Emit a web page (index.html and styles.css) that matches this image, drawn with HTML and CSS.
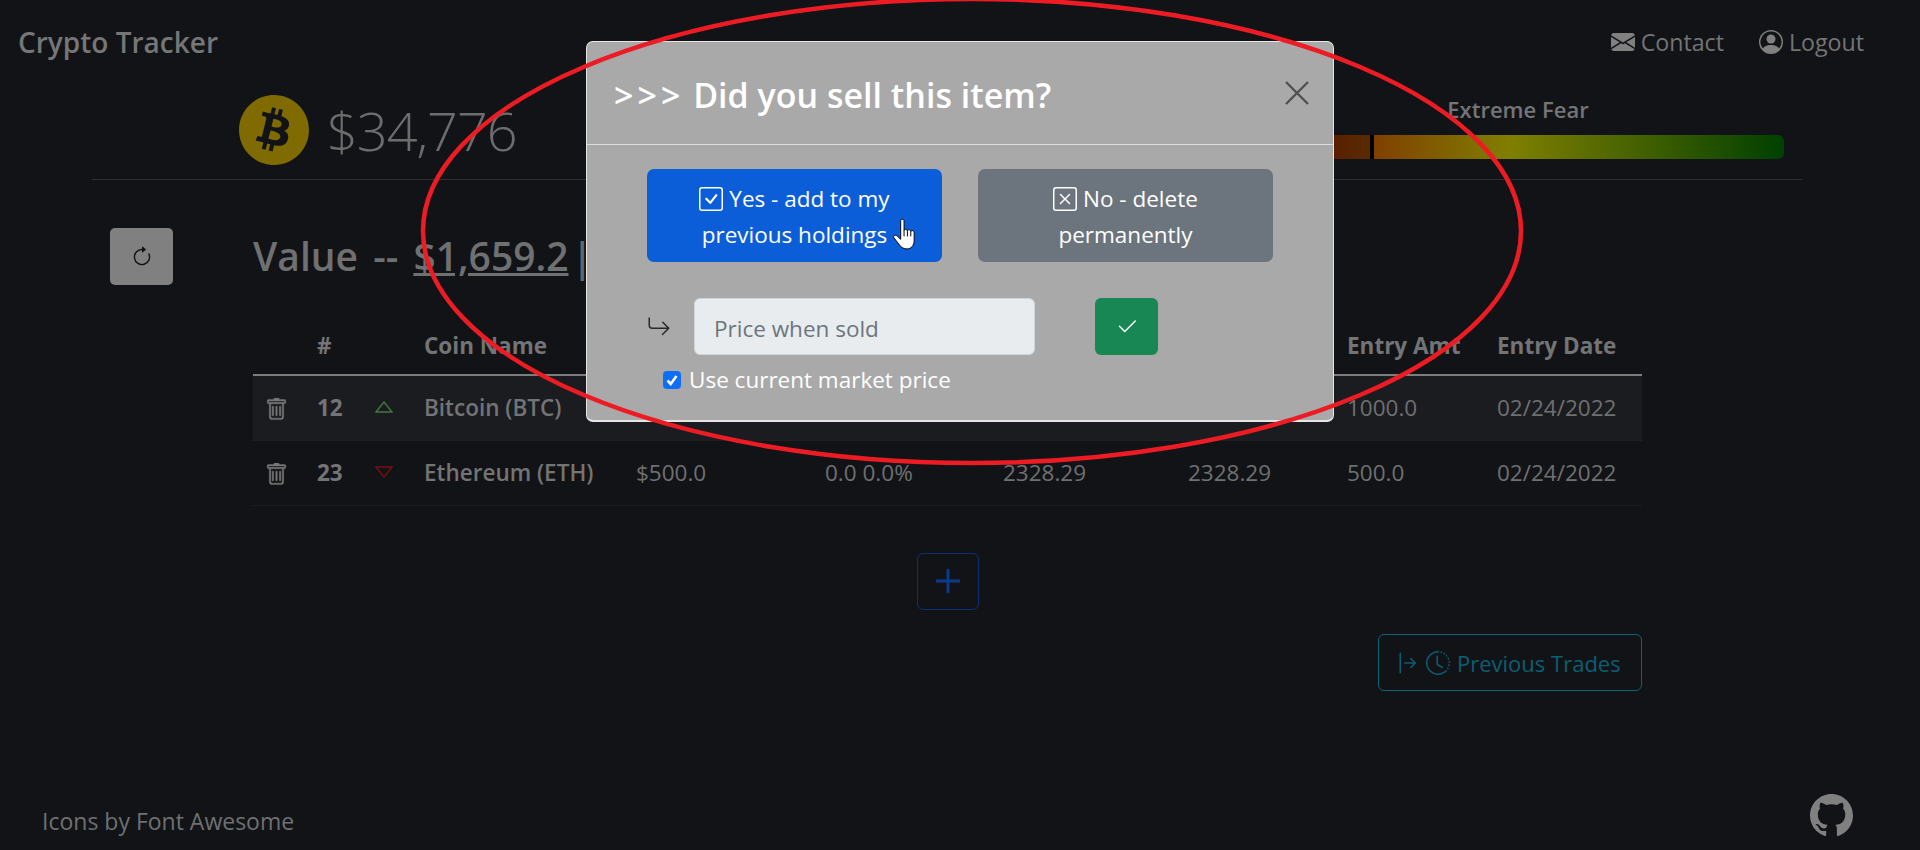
FILE: index.html
```html
<!DOCTYPE html>
<html lang="en">
<head>
    <meta charset="UTF-8">
    <meta name="viewport" content="width=device-width, initial-scale=1.0">
    <title>Crypto Tracker</title>
    <link rel="stylesheet" href="styles.css">
</head>
<body>
    <nav class="navbar">
        <a class="brand">Crypto Tracker</a>
        <div class="nav-links">
            <a class="nav-link">
                <svg class="nav-icon" viewBox="0 0 16 16"><path d="M.05 3.555A2 2 0 0 1 2 2h12a2 2 0 0 1 1.95 1.555L8 8.414.05 3.555ZM0 4.697v7.104l5.803-3.558L0 4.697ZM6.761 8.83l-6.57 4.027A2 2 0 0 0 2 14h12a2 2 0 0 0 1.808-1.144l-6.57-4.027L8 9.586l-1.239-.757Zm3.436-.586L16 11.801V4.697l-5.803 3.546Z"/></svg>
                Contact
            </a>
            <a class="nav-link">
                <svg class="nav-icon" viewBox="0 0 16 16"><path d="M11 6a3 3 0 1 1-6 0 3 3 0 0 1 6 0z"/><path fill-rule="evenodd" d="M0 8a8 8 0 1 1 16 0A8 8 0 0 1 0 8zm8-7a7 7 0 0 0-5.468 11.37C3.242 11.226 4.805 10 8 10s4.757 1.225 5.468 2.37A7 7 0 0 0 8 1z"/></svg>
                Logout
            </a>
        </div>
    </nav>

    <section class="ticker">
        <div class="ticker-price">
            <svg class="coin" viewBox="8 8 496 496"><path d="M504 256c0 136.967-111.033 248-248 248S8 392.967 8 256 119.033 8 256 8s248 111.033 248 248zm-141.651-35.33c4.937-32.999-20.191-50.739-54.55-62.573l11.146-44.702-27.213-6.781-10.851 43.524c-7.154-1.783-14.502-3.464-21.803-5.13l10.929-43.81-27.198-6.781-11.153 44.686c-5.922-1.349-11.735-2.682-17.377-4.084l.031-.14-37.53-9.37-7.239 29.062s20.191 4.627 19.765 4.913c11.022 2.751 13.014 10.044 12.68 15.825l-12.696 50.925c.76.194 1.744.473 2.829.907-.907-.225-1.876-.473-2.876-.713l-17.796 71.338c-1.349 3.348-4.767 8.37-12.471 6.464.271.395-19.78-4.937-19.78-4.937l-13.51 31.147 35.414 8.827c6.588 1.651 13.045 3.379 19.4 5.006l-11.262 45.213 27.182 6.781 11.153-44.733a1038.209 1038.209 0 0 0 21.687 5.627l-11.115 44.523 27.213 6.781 11.262-45.128c46.404 8.781 81.299 5.239 95.986-36.727 11.836-33.79-.589-53.281-25.004-65.991 17.78-4.098 31.174-15.792 34.747-39.949zm-62.177 87.179c-8.41 33.79-65.308 15.523-83.755 10.943l14.944-59.899c18.446 4.603 77.6 13.717 68.811 48.956zm8.417-87.667c-7.673 30.736-55.031 15.12-70.393 11.292l13.548-54.327c15.363 3.828 64.836 10.973 56.845 43.035z"/></svg>
            <span class="price">$34,776</span>
        </div>
        <div class="fear">
            <div class="fear-label">Extreme Fear</div>
            <div class="fear-bar"><div class="fear-fill"></div></div>
        </div>
    </section>

    <main class="holdings">
        <button class="refresh-btn">
            <svg class="refresh-icon" viewBox="0 0 16 16"><path fill-rule="evenodd" d="M8 3a5 5 0 1 0 4.546 2.914.5.5 0 0 1 .908-.417A6 6 0 1 1 8 2v1z"/><path d="M8 4.466V.534a.25.25 0 0 1 .41-.192l2.36 1.966c.12.1.12.284 0 .384L8.41 4.658A.25.25 0 0 1 8 4.466z"/></svg>
        </button>
        <div class="holdings-main">
            <h2 class="value-title">Value -- <u>$1,659.2</u><span class="value-sep">|</span></h2>
            <table class="coins">
                <thead>
                    <tr>
                        <th></th>
                        <th>#</th>
                        <th></th>
                        <th>Coin Name</th>
                        <th>Value</th>
                        <th>Gain</th>
                        <th>Price</th>
                        <th>Entry</th>
                        <th>Entry Amt</th>
                        <th>Entry Date</th>
                    </tr>
                </thead>
                <tbody>
                    <tr class="striped">
                        <td><svg class="trash" viewBox="0 0 16 16"><path d="M5.5 5.5A.5.5 0 0 1 6 6v6a.5.5 0 0 1-1 0V6a.5.5 0 0 1 .5-.5zm2.5 0a.5.5 0 0 1 .5.5v6a.5.5 0 0 1-1 0V6a.5.5 0 0 1 .5-.5zm3 .5a.5.5 0 0 0-1 0v6a.5.5 0 0 0 1 0V6z"/><path fill-rule="evenodd" d="M14.5 3a1 1 0 0 1-1 1H13v9a2 2 0 0 1-2 2H5a2 2 0 0 1-2-2V4h-.5a1 1 0 0 1-1-1V2a1 1 0 0 1 1-1H6a1 1 0 0 1 1-1h2a1 1 0 0 1 1 1h3.5a1 1 0 0 1 1 1v1zM4.118 4 4 4.059V13a1 1 0 0 0 1 1h6a1 1 0 0 0 1-1V4.059L11.882 4H4.118zM2.5 3V2h11v1h-11z"/></svg></td>
                        <td class="rank">12</td>
                        <td><svg class="trend up" viewBox="0 0 18 12"><path d="M1 11 9 1l8 10z"/></svg></td>
                        <td class="name">Bitcoin (BTC)</td>
                        <td>$1159.2</td>
                        <td>159.2 15.9%</td>
                        <td>34776.0</td>
                        <td>30000.0</td>
                        <td>1000.0</td>
                        <td>02/24/2022</td>
                    </tr>
                    <tr>
                        <td><svg class="trash" viewBox="0 0 16 16"><path d="M5.5 5.5A.5.5 0 0 1 6 6v6a.5.5 0 0 1-1 0V6a.5.5 0 0 1 .5-.5zm2.5 0a.5.5 0 0 1 .5.5v6a.5.5 0 0 1-1 0V6a.5.5 0 0 1 .5-.5zm3 .5a.5.5 0 0 0-1 0v6a.5.5 0 0 0 1 0V6z"/><path fill-rule="evenodd" d="M14.5 3a1 1 0 0 1-1 1H13v9a2 2 0 0 1-2 2H5a2 2 0 0 1-2-2V4h-.5a1 1 0 0 1-1-1V2a1 1 0 0 1 1-1H6a1 1 0 0 1 1-1h2a1 1 0 0 1 1 1h3.5a1 1 0 0 1 1 1v1zM4.118 4 4 4.059V13a1 1 0 0 0 1 1h6a1 1 0 0 0 1-1V4.059L11.882 4H4.118zM2.5 3V2h11v1h-11z"/></svg></td>
                        <td class="rank">23</td>
                        <td><svg class="trend down" viewBox="0 0 18 12"><path d="M1 1 9 11l8-10z"/></svg></td>
                        <td class="name">Ethereum (ETH)</td>
                        <td>$500.0</td>
                        <td>0.0 0.0%</td>
                        <td>2328.29</td>
                        <td>2328.29</td>
                        <td>500.0</td>
                        <td>02/24/2022</td>
                    </tr>
                </tbody>
            </table>
            <div class="add-row">
                <button class="add-btn">
                    <svg class="add-icon" viewBox="0 0 24 24"><path d="M12 0v24M0 12h24"/></svg>
                </button>
            </div>
            <div class="trades-row">
                <button class="trades-btn">
                    <svg class="trades-icon" viewBox="0 0 16 16"><path fill-rule="evenodd" d="M6 8a.5.5 0 0 0 .5.5h5.793l-2.147 2.146a.5.5 0 0 0 .708.708l3-3a.5.5 0 0 0 0-.708l-3-3a.5.5 0 0 0-.708.708L12.293 7.5H6.5A.5.5 0 0 0 6 8zm-2.5 7a.5.5 0 0 1-.5-.5v-13a.5.5 0 0 1 1 0v13a.5.5 0 0 1-.5.5z"/></svg>
                    <svg class="trades-icon clock" viewBox="0 0 16 16"><path d="M8.515 1.019A7 7 0 0 0 8 1V0a8 8 0 0 1 .589.022l-.074.997zm2.004.45a7.003 7.003 0 0 0-.985-.299l.219-.976c.383.086.76.2 1.126.342l-.36.933zm1.37.71a7.01 7.01 0 0 0-.439-.27l.493-.87a8.025 8.025 0 0 1 .979.654l-.615.789a6.996 6.996 0 0 0-.418-.302zm1.834 1.79a6.99 6.99 0 0 0-.653-.796l.724-.69c.27.285.52.59.747.91l-.818.576zm.744 1.352a7.08 7.08 0 0 0-.214-.468l.893-.45a7.976 7.976 0 0 1 .45 1.088l-.95.313a7.023 7.023 0 0 0-.179-.483zm.53 2.507a6.991 6.991 0 0 0-.1-1.025l.985-.17c.067.386.106.778.116 1.17l-1 .025zm-.131 1.538c.033-.17.06-.339.081-.51l.993.123a7.957 7.957 0 0 1-.23 1.155l-.964-.267c.046-.165.086-.332.12-.501zm-.952 2.379c.184-.29.346-.594.486-.908l.914.405c-.16.36-.345.706-.555 1.038l-.845-.535zm-.964 1.205c.122-.122.239-.248.35-.378l.758.653a8.073 8.073 0 0 1-.401.432l-.707-.707z"/><path d="M8 1a7 7 0 1 0 4.95 11.95l.707.707A8.001 8.001 0 1 1 8 0v1z"/><path d="M7.5 3a.5.5 0 0 1 .5.5v5.21l3.248 1.856a.5.5 0 0 1-.496.868l-3.5-2A.5.5 0 0 1 7 9V3.5a.5.5 0 0 1 .5-.5z"/></svg>
                    Previous Trades
                </button>
            </div>
        </div>
    </main>

    <footer class="footer">
        <span class="credit">Icons by Font Awesome</span>
        <svg class="github" viewBox="0 0 16 16"><path d="M8 0C3.58 0 0 3.58 0 8c0 3.54 2.29 6.53 5.47 7.59.4.07.55-.17.55-.38 0-.19-.01-.82-.01-1.49-2.01.37-2.53-.49-2.69-.94-.09-.23-.48-.94-.82-1.13-.28-.15-.68-.52-.01-.53.63-.01 1.08.58 1.23.82.72 1.21 1.87.87 2.33.66.07-.52.28-.87.51-1.07-1.78-.2-3.64-.89-3.64-3.95 0-.87.31-1.59.82-2.15-.08-.2-.36-1.02.08-2.12 0 0 .67-.21 2.2.82.64-.18 1.32-.27 2-.27.68 0 1.36.09 2 .27 1.53-1.04 2.2-.82 2.2-.82.44 1.1.16 1.92.08 2.12.51.56.82 1.27.82 2.15 0 3.07-1.87 3.75-3.65 3.95.29.25.54.73.54 1.48 0 1.07-.01 1.93-.01 2.2 0 .21.15.46.55.38A8.013 8.013 0 0016 8c0-4.42-3.58-8-8-8z"/></svg>
    </footer>

    <div class="modal">
        <div class="modal-header">
            <h3 class="modal-title"><span class="title-arrows">&gt;&gt;&gt;</span> Did you sell this item?</h3>
            <svg class="close-x" viewBox="0 0 24 24"><path d="M1 1l22 22M23 1 1 23"/></svg>
        </div>
        <div class="modal-body">
            <div class="choice-row">
                <button class="choice yes">
                    <svg class="box-icon" viewBox="0 0 16 16"><path d="M14 1a1 1 0 0 1 1 1v12a1 1 0 0 1-1 1H2a1 1 0 0 1-1-1V2a1 1 0 0 1 1-1h12zM2 0a2 2 0 0 0-2 2v12a2 2 0 0 0 2 2h12a2 2 0 0 0 2-2V2a2 2 0 0 0-2-2H2z"/><path d="M10.97 4.97a.75.75 0 0 1 1.071 1.05l-3.992 4.99a.75.75 0 0 1-1.08.02L4.324 8.384a.75.75 0 1 1 1.06-1.06l2.094 2.093 3.473-4.425a.235.235 0 0 1 .02-.022z"/></svg>
                    Yes - add to my previous holdings
                </button>
                <button class="choice no">
                    <svg class="box-icon" viewBox="0 0 16 16"><path d="M14 1a1 1 0 0 1 1 1v12a1 1 0 0 1-1 1H2a1 1 0 0 1-1-1V2a1 1 0 0 1 1-1h12zM2 0a2 2 0 0 0-2 2v12a2 2 0 0 0 2 2h12a2 2 0 0 0 2-2V2a2 2 0 0 0-2-2H2z"/><path d="M4.646 4.646a.5.5 0 0 1 .708 0L8 7.293l2.646-2.647a.5.5 0 0 1 .708.708L8.707 8l2.647 2.646a.5.5 0 0 1-.708.708L8 8.707l-2.646 2.647a.5.5 0 0 1-.708-.708L7.293 8 4.646 5.354a.5.5 0 0 1 0-.708z"/></svg>
                    No - delete permanently
                </button>
            </div>
            <div class="price-row">
                <svg class="return-icon" viewBox="0 0 16 16"><path fill-rule="evenodd" d="M1.5 1.5A.5.5 0 0 0 1 2v4.8a2.5 2.5 0 0 0 2.5 2.5h9.793l-3.347 3.346a.5.5 0 0 0 .708.708l4.2-4.2a.5.5 0 0 0 0-.708l-4-4a.5.5 0 0 0-.708.708L13.293 8.3H3.5A1.5 1.5 0 0 1 2 6.8V2a.5.5 0 0 0-.5-.5z"/></svg>
                <input class="price-input" type="text" placeholder="Price when sold" disabled>
                <button class="confirm-btn">
                    <svg class="confirm-icon" viewBox="0 0 16 16"><path d="M13.854 3.646a.5.5 0 0 1 0 .708l-7 7a.5.5 0 0 1-.708 0l-3.5-3.5a.5.5 0 1 1 .708-.708L6.5 10.293l6.646-6.647a.5.5 0 0 1 .708 0z"/></svg>
                </button>
            </div>
            <label class="market-check">
                <span class="check-box">
                    <svg viewBox="0 0 18 18"><path d="M4.500 9.500 7.700 13 13.500 5"/></svg>
                </span>
                Use current market price
            </label>
        </div>
    </div>

    <svg class="cursor" viewBox="0 0 26 34">
        <path d="M8 3c0-2.500 3.500-2.500 3.500 0v10c0-2 3.500-2 3.500 .5 0-2 3.500-2 3.500 .5 0-1.800 3.500-1.500 3.500 1v8c0 5.500-3 9-7.500 9-4 0-6.500-2-8.500-5l-5-6.500c-1.200-2.200 1.500-3.800 3.300-2L8 22z"/>
        <path d="M11.500 13v6M15 13.500v5.500M18.500 14v5"/>
    </svg>

    <svg class="annotation" viewBox="0 0 1920 850"><ellipse cx="972" cy="231" rx="549" ry="232"/></svg>
</body>
</html>
```

FILE: styles.css
```css
* {
    box-sizing: border-box;
}
html, body {
    margin: 0;
    height: 850px;
    overflow: hidden;
}
body {
    position: relative;
    background-color: #121316;
    color: #6f7071;
    font-family: "Open Sans", "Noto Sans", sans-serif;
    font-size: 22.5px;
    line-height: 36px;
}
button {
    font-family: inherit;
    font-size: inherit;
    line-height: inherit;
    cursor: pointer;
}

/* nav */
.navbar {
    display: flex;
    justify-content: space-between;
    align-items: center;
    height: 84px;
    padding: 0 56px 0 18px;
}
.brand {
    font-size: 28px;
    font-weight: 600;
    color: #757677;
}
.nav-links {
    display: flex;
    gap: 35px;
}
.nav-link {
    display: flex;
    align-items: center;
    gap: 6px;
    font-size: 23.2px;
    color: #737475;
}
.nav-icon {
    width: 24px;
    height: 24px;
    fill: #808080;
}

/* price + fear gauge */
.ticker {
    display: flex;
    justify-content: space-between;
    align-items: center;
    height: 96px;
    margin: 0 118px 0 92px;
    padding: 0 18px 4px 147px;
    border-bottom: 1px solid #2e2f31;
}
.ticker-price {
    display: flex;
    align-items: center;
    gap: 18px;
}
.coin {
    width: 70px;
    height: 70px;
    fill: #7f6b00;
}
.price {
    font-size: 54px;
    font-weight: 300;
    line-height: 70px;
    letter-spacing: -1px;
    color: #6c6d6e;
}
.fear {
    align-self: flex-start;
    width: 548px;
    margin-top: 10px;
}
.fear-label {
    padding-left: 16px;
    text-align: center;
    font-size: 22px;
    font-weight: 600;
    line-height: 30px;
    color: #747576;
}
.fear-bar {
    height: 24px;
    margin-top: 11px;
    border-radius: 6px;
    background: linear-gradient(to right, #800000, #807f00 50%, #004000);
    overflow: hidden;
}
.fear-fill {
    width: 138px;
    height: 100%;
    background-color: rgba(0,0,0,0.3);
    border-right: 4px solid #000;
}

/* holdings */
.holdings {
    display: flex;
    gap: 80px;
    margin: 48px 0 0 110px;
}
.refresh-btn {
    display: flex;
    align-items: center;
    justify-content: center;
    width: 63px;
    height: 57px;
    padding: 0;
    border: none;
    border-radius: 5px;
    background-color: #808080;
}
.refresh-icon {
    width: 22px;
    height: 24px;
    fill: #111;
}
.holdings-main {
    width: 1389px;
}
.value-title {
    margin: -1px 0 31px 0;
    font-size: 39px;
    font-weight: 600;
    line-height: 57px;
    word-spacing: 5px;
    color: #6f7071;
}
.value-sep {
    margin-left: 3px;
    color: #5b6b70;
}
.coins {
    width: 100%;
    border-collapse: collapse;
    table-layout: fixed;
}
.coins th {
    height: 60px;
    padding: 2px 15px 0 15px;
    border-bottom: 2px solid #7d7d7d;
    text-align: left;
    font-weight: 700;
    white-space: nowrap;
    color: #737475;
}
.coins td {
    height: 65px;
    padding: 0 15px;
    border-bottom: 1px solid #1e1f22;
    white-space: nowrap;
    color: #6f7071;
}
.coins th:nth-child(1) { width: 49px; }
.coins th:nth-child(2) { width: 58px; }
.coins th:nth-child(3) { width: 49px; }
.coins th:nth-child(4) { width: 212px; }
.coins th:nth-child(5) { width: 189px; }
.coins th:nth-child(6) { width: 178px; }
.coins th:nth-child(7) { width: 185px; }
.coins th:nth-child(8) { width: 159px; }
.coins th:nth-child(9) { width: 150px; }
.coins th:nth-child(10) { width: 160px; }
.striped td {
    background-color: #1b1c1f;
}
.coins .rank {
    font-weight: 700;
    color: #737475;
}
.coins .name {
    font-weight: 600;
    color: #737475;
}
.trash {
    display: block;
    width: 23px;
    height: 23px;
    margin: 4px 0 0 -3px;
    fill: #777;
    stroke: #777;
    stroke-width: 0.3;
}
.trend {
    display: block;
    width: 18px;
    height: 12px;
    margin-top: -2px;
    fill: none;
    stroke-width: 1.4;
}
.up {
    stroke: #3f7b3f;
}
.down {
    stroke: #7a0f10;
}
.add-row {
    display: flex;
    justify-content: center;
    margin-top: 47px;
}
.add-btn {
    display: flex;
    align-items: center;
    justify-content: center;
    width: 62px;
    height: 57px;
    padding: 0;
    background: none;
    border: 1px solid #0b3272;
    border-radius: 6px;
}
.add-icon {
    width: 24px;
    height: 24px;
    fill: none;
    stroke: #0b3a8a;
    stroke-width: 3;
}
.trades-row {
    display: flex;
    justify-content: flex-end;
    margin-top: 24px;
}
.trades-btn {
    display: flex;
    align-items: center;
    gap: 4px;
    height: 57px;
    width: 264px;
    padding: 2px 0 0 16px;
    background: none;
    border: 1px solid #0a6478;
    border-radius: 6px;
    font-size: 22px;
    color: #0a5f72;
    white-space: nowrap;
}
.trades-icon {
    width: 24px;
    height: 24px;
    fill: #0a5f72;
}
.clock {
    margin: 0 3px 0 3px;
}

/* footer */
.footer {
    display: flex;
    justify-content: space-between;
    align-items: flex-start;
    margin-top: 103px;
    padding: 0 67px 0 42px;
}
.credit {
    margin-top: 9px;
    font-size: 23px;
}
.github {
    width: 43px;
    height: 43px;
    fill: #808080;
}

/* modal */
.modal {
    position: absolute;
    left: 586px;
    top: 41px;
    width: 748px;
    height: 381px;
    background-color: #a9a9a9;
    border: 1px solid #e6e6e6;
    border-bottom-width: 2px;
    border-radius: 7px;
    color: #fff;
}
.modal-header {
    display: flex;
    justify-content: space-between;
    align-items: center;
    height: 103px;
    padding: 0 24px 0 27px;
    border-bottom: 1px solid #dcdcdc;
}
.modal-title {
    margin: 0;
    padding-top: 4px;
    font-size: 34px;
    font-weight: 600;
    line-height: 46px;
}
.title-arrows {
    letter-spacing: 4px;
}
.close-x {
    width: 24px;
    height: 24px;
    fill: none;
    stroke: #505050;
    stroke-width: 2.4;
}
.modal-body {
    padding: 24px 60px 0 60px;
}
.choice-row {
    display: flex;
    gap: 36px;
}
.choice {
    width: 295px;
    height: 93px;
    padding: 2px 30px 0 30px;
    border: none;
    border-radius: 7px;
    color: #fff;
}
.yes {
    background-color: #0b5ed7;
}
.no {
    background-color: #6c757d;
}
.box-icon {
    width: 24px;
    height: 24px;
    fill: #fff;
    vertical-align: -4px;
}
.price-row {
    display: flex;
    align-items: center;
    margin-top: 36px;
}
.return-icon {
    width: 24px;
    height: 24px;
    margin-right: 23px;
    fill: #2a2a2a;
}
.price-input {
    width: 341px;
    height: 57px;
    padding: 3px 19px 0 19px;
    background-color: #e9ecef;
    border: 1px solid #ced4da;
    border-radius: 6px;
    font-family: inherit;
    font-size: inherit;
}
.price-input::placeholder {
    color: #6c757d;
    opacity: 1;
}
.confirm-btn {
    display: flex;
    align-items: center;
    justify-content: center;
    width: 63px;
    height: 57px;
    margin-left: 60px;
    padding: 0;
    border: none;
    border-radius: 6px;
    background-color: #198754;
}
.confirm-icon {
    width: 24px;
    height: 24px;
    fill: #fff;
}
.market-check {
    display: flex;
    align-items: center;
    gap: 8px;
    margin: 7px 0 0 16px;
    line-height: 36px;
}
.check-box {
    display: block;
    width: 18px;
    height: 18px;
    background-color: #0d6efd;
    border-radius: 4px;
}
.check-box svg {
    display: block;
    fill: none;
    stroke: #fff;
    stroke-width: 2.6;
}

/* overlays */
.cursor {
    position: absolute;
    left: 893px;
    top: 218px;
    width: 25px;
    height: 33px;
    fill: #fff;
    stroke: #000;
    stroke-width: 1;
}
.annotation {
    position: absolute;
    left: 0;
    top: 0;
    width: 1920px;
    height: 850px;
    fill: none;
    stroke: #ed1c24;
    stroke-width: 4.5;
    pointer-events: none;
}
```
